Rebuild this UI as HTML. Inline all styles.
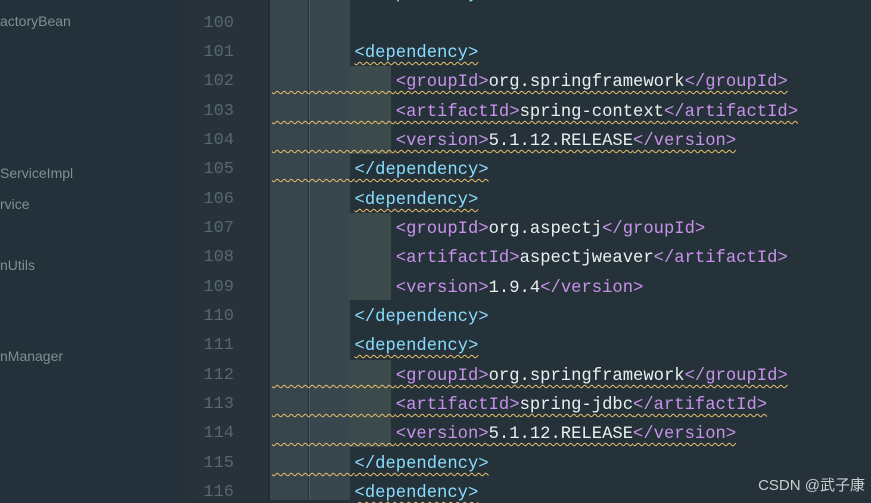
<!DOCTYPE html>
<html><head><meta charset="utf-8"><style>
html,body{margin:0;padding:0;width:871px;height:500px;overflow:hidden;background:#263239;}
.side{position:absolute;left:0;top:0;width:185px;height:500px;background:#25313a;}
.side div{position:absolute;left:0;font-family:"Liberation Sans",sans-serif;font-size:14px;color:#7f8f96;}
.gut{position:absolute;left:185px;top:0;width:83px;height:500px;background:#27323a;border-right:1px solid #1f2a30;}
.ed{position:absolute;left:269px;top:0;right:0;height:500px;background:#263239;}
.c1{position:absolute;left:270px;top:0;width:38px;height:500px;background:#37454d;}
.c2{position:absolute;left:309px;top:0;width:40px;height:500px;background:#38474d;border-left:1px solid #4b5a60;}
.c3{position:absolute;left:349px;width:42px;background:#3d4a4b;}
.ln{position:absolute;left:185px;width:49px;text-align:right;font-family:"Liberation Mono",monospace;font-size:17px;color:#56676e;}
.row{position:absolute;left:272px;white-space:pre;font-family:"Liberation Mono",monospace;font-size:17.2px;color:#e8f0f0;}
.d{color:#89ddff}.p{color:#c792ea}
.w{text-decoration:underline wavy #e8c06a;text-decoration-thickness:1px;text-underline-offset:4px;}
.wm{position:absolute;right:6px;top:474px;font-family:"Liberation Sans","Noto Sans CJK SC",sans-serif;font-size:15px;color:#c8ced0;}
</style></head><body>
<div class="side">
<div style="top:13px">actoryBean</div>
<div style="top:165px">ServiceImpl</div>
<div style="top:196px">rvice</div>
<div style="top:257px">nUtils</div>
<div style="top:348px">nManager</div>
</div>
<div class="gut"></div>
<div class="ed"></div>
<div class="c1"></div><div class="c2"></div>
<div class="c3" style="top:66px;height:88px"></div>
<div class="c3" style="top:213px;height:87px"></div>
<div class="c3" style="top:360px;height:87px"></div>

<div class="ln" style="top:14px">100</div>
<div class="ln" style="top:43px">101</div>
<div class="ln" style="top:72px">102</div>
<div class="ln" style="top:102px">103</div>
<div class="ln" style="top:131px">104</div>
<div class="ln" style="top:160px">105</div>
<div class="ln" style="top:190px">106</div>
<div class="ln" style="top:219px">107</div>
<div class="ln" style="top:248px">108</div>
<div class="ln" style="top:278px">109</div>
<div class="ln" style="top:307px">110</div>
<div class="ln" style="top:336px">111</div>
<div class="ln" style="top:366px">112</div>
<div class="ln" style="top:395px">113</div>
<div class="ln" style="top:424px">114</div>
<div class="ln" style="top:454px">115</div>
<div class="ln" style="top:483px">116</div>

<div class="row" style="top:-15px">        <span class="d">&lt;/dependency&gt;</span></div>
<div class="row" style="top:44px">        <span class="w"><span class="d">&lt;dependency&gt;</span></span></div>
<div class="row" style="top:73px"><span class="w">            <span class="p">&lt;groupId&gt;</span>org.springframework<span class="p">&lt;/groupId&gt;</span></span></div>
<div class="row" style="top:103px"><span class="w">            <span class="p">&lt;artifactId&gt;</span>spring-context<span class="p">&lt;/artifactId&gt;</span></span></div>
<div class="row" style="top:132px"><span class="w">            <span class="p">&lt;version&gt;</span>5.1.12.RELEASE<span class="p">&lt;/version&gt;</span></span></div>
<div class="row" style="top:161px"><span class="w">        <span class="d">&lt;/dependency&gt;</span></span></div>
<div class="row" style="top:191px">        <span class="w"><span class="d">&lt;dependency&gt;</span></span></div>
<div class="row" style="top:220px">            <span class="p">&lt;groupId&gt;</span>org.aspectj<span class="p">&lt;/groupId&gt;</span></div>
<div class="row" style="top:249px">            <span class="p">&lt;artifactId&gt;</span>aspectjweaver<span class="p">&lt;/artifactId&gt;</span></div>
<div class="row" style="top:279px">            <span class="p">&lt;version&gt;</span>1.9.4<span class="p">&lt;/version&gt;</span></div>
<div class="row" style="top:308px">        <span class="d">&lt;/dependency&gt;</span></div>
<div class="row" style="top:337px">        <span class="w"><span class="d">&lt;dependency&gt;</span></span></div>
<div class="row" style="top:367px"><span class="w">            <span class="p">&lt;groupId&gt;</span>org.springframework<span class="p">&lt;/groupId&gt;</span></span></div>
<div class="row" style="top:396px"><span class="w">            <span class="p">&lt;artifactId&gt;</span>spring-jdbc<span class="p">&lt;/artifactId&gt;</span></span></div>
<div class="row" style="top:425px"><span class="w">            <span class="p">&lt;version&gt;</span>5.1.12.RELEASE<span class="p">&lt;/version&gt;</span></span></div>
<div class="row" style="top:455px"><span class="w">        <span class="d">&lt;/dependency&gt;</span></span></div>
<div class="row" style="top:484px">        <span class="w"><span class="d">&lt;dependency&gt;</span></span></div>
<div class="wm">CSDN @武子康</div>
</body></html>
